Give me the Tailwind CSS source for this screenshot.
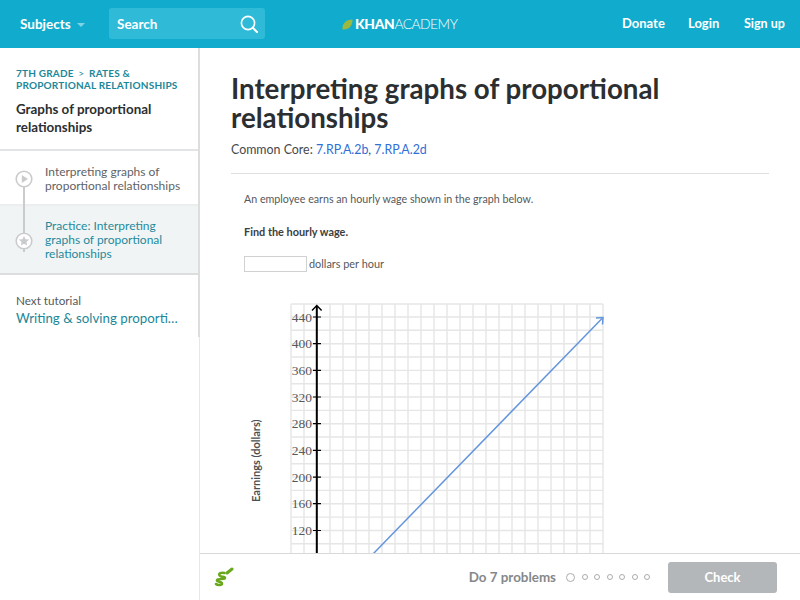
<!DOCTYPE html>
<html lang="en">
<head>
    <meta charset="UTF-8">
    <meta name="viewport" content="width=device-width, initial-scale=1.0">
    <title>Interpreting graphs of proportional relationships</title>
    <script src="https://cdn.jsdelivr.net/npm/@tailwindcss/browser@4"></script>
</head>
<body class="bg-white font-['Lato',sans-serif] text-[#3b3e40]">
    <div class="relative w-[800px] h-[600px] overflow-hidden">
        <!-- top nav -->
        <header class="h-[48px] bg-[#11accd] flex items-center text-white">
            <div class="w-[109px] pl-[20px] flex items-center gap-[6px] text-[13.5px] font-bold">
                <span>Subjects</span>
                <span class="w-0 h-0 mt-[2px] border-x-[4px] border-x-transparent border-t-[4px] border-t-[#7fd3e6]"></span>
            </div>
            <div class="w-[156px] h-[31px] -mt-[1px] bg-[#2fbbd8] rounded-[3px] flex items-center justify-between pl-[8px] pr-[6px] text-[13.5px] font-bold">
                <span class="mt-[2px]">Search</span>
                <svg width="20" height="20" viewBox="0 0 20 20" fill="none" stroke="white" stroke-width="1.6" stroke-linecap="round"><circle cx="9" cy="9" r="6.6"/><path d="M13.8 13.8L18 18" stroke-width="2"/></svg>
            </div>
            <div class="w-[357px] pl-[77px] flex items-center">
                <svg width="11" height="11" viewBox="0 0 11 11" class="mr-[2px]"><path d="M0.5 10.5C0 5 3.5 0.5 10.5 0.5C10.5 7 7 11 0.5 10.5Z" fill="#9cb93f"/></svg>
                <span class="text-[13.8px] font-black tracking-[-0.3px]">KHAN</span><span class="text-[13.8px] font-light tracking-[-0.5px]">ACADEMY</span>
            </div>
            <nav class="flex-1 flex items-center text-[13px] font-bold">
                <span class="w-[66px]">Donate</span>
                <span class="w-[56px]">Login</span>
                <span class="text-[12.5px]">Sign up</span>
            </nav>
        </header>

        <div class="flex h-[552px]">
            <!-- sidebar -->
            <aside class="w-[200px] shrink-0 border-r border-[#e6e7e8]">
                <div class="h-[289px] -mr-px border-r-2 border-[#dcdddf]">
                    <div class="h-[103px] border-b-2 border-[#e3e4e5] px-[16px] pt-[19px]">
                        <div class="text-[10px] leading-[12px] font-bold tracking-[0.2px] text-[#1b8799] whitespace-nowrap">7TH GRADE <span class="mx-[2px] font-normal">&gt;</span> RATES &amp;<br>PROPORTIONAL RELATIONSHIPS</div>
                        <div class="mt-[9px] text-[13.4px] leading-[18px] font-bold text-[#2c2f31]">Graphs of proportional relationships</div>
                    </div>
                    <div class="relative">
                        <div class="absolute left-[23px] top-[31px] w-[2px] h-[70px] bg-[#c9cbcd]"></div>
                        <div class="h-[55px] border-b-2 border-[#eceded] pl-[45px] pt-[14px] text-[12px] leading-[14px] text-[#5f6366]">Interpreting graphs of<br>proportional relationships</div>
                        <div class="h-[69px] bg-[#f1f4f4] border-b-2 border-[#dcdddf] pl-[45px] pt-[13px] text-[12px] leading-[14px] text-[#1f8a9c]">Practice: Interpreting<br>graphs of proportional<br>relationships</div>
                        <svg class="absolute left-[15px] top-[19px]" width="18" height="18" viewBox="0 0 18 18"><circle cx="9" cy="9" r="7.8" fill="white" stroke="#c9cbcd" stroke-width="1.6"/><path d="M6.8 5L13 9L6.8 13Z" fill="#c9cbcd"/></svg>
                        <svg class="absolute left-[15px] top-[81px]" width="18" height="18" viewBox="0 0 18 18"><circle cx="9" cy="9" r="7.8" fill="white" stroke="#c9cbcd" stroke-width="1.6"/><path d="M9 3.8L10.5 7.2L14.2 7.6L11.4 10L12.2 13.6L9 11.7L5.8 13.6L6.6 10L3.8 7.6L7.5 7.2Z" fill="#c9cbcd"/></svg>
                    </div>
                    <div class="pl-[16px] pt-[17px]">
                        <div class="text-[11.7px] leading-[16px] text-[#55595c]">Next tutorial</div>
                        <div class="mt-[1px] w-[164px] truncate text-[13.3px] leading-[19px] text-[#1b8799]">Writing &amp; solving proportional relationships</div>
                    </div>
                </div>
            </aside>

            <!-- main content -->
            <main class="flex-1 pl-[31px] pr-[31px] pt-[26px]">
                <h1 class="text-[27.7px] leading-[29px] font-bold text-[#2c2f31]">Interpreting graphs of proportional relationships</h1>
                <div class="mt-[9px] text-[12.4px] leading-[18px] text-[#45494c]">Common Core: <span class="text-[#2f6fd6]">7.RP.A.2b</span>, <span class="text-[#2f6fd6]">7.RP.A.2d</span></div>
                <div class="mt-[14px] h-[1px] bg-[#dfe0e1]"></div>
                <div class="pl-[13px] pt-[17px]">
                    <p class="text-[10.7px] leading-[16px] text-[#55595c]">An employee earns an hourly wage shown in the graph below.</p>
                    <p class="mt-[17px] text-[10.9px] leading-[16px] font-bold text-[#3b3e40]">Find the hourly wage.</p>
                    <div class="mt-[16px] flex items-center text-[10.9px] leading-[16px] text-[#55595c]">
                        <input class="w-[63px] h-[16px] bg-white border border-[#cfd1d3] mr-[2px]" type="text" aria-label="dollars per hour">
                        <span>dollars per hour</span>
                    </div>
                    <!-- graph, svg x=240 y=295 in page coords -->
                    <svg class="block mt-[24px] -ml-[4px]" width="370" height="258" viewBox="240 296 370 258">
                        <g stroke="#e6e6e6" stroke-width="1.400" fill="none">
                            <path d="M291 304V554M304 304V554M317 304V554M330 304V554M343 304V554M356 304V554M369 304V554M382 304V554M395 304V554M408 304V554M421 304V554M434 304V554M447 304V554M460 304V554M473 304V554M486 304V554M499 304V554M512 304V554M525 304V554M538 304V554M551 304V554M564 304V554M577 304V554M590 304V554M603 304V554"/>
                            <path d="M291 304H603M291 317H603M291 330.300H603M291 343.700H603M291 357H603M291 370.400H603M291 383.700H603M291 397H603M291 410.400H603M291 423.700H603M291 437H603M291 450.400H603M291 463.700H603M291 477.100H603M291 490.400H603M291 503.700H603M291 517.100H603M291 530.500H603M291 543.800H603"/>
                        </g>
                        <path d="M316.800 554V306" stroke="#000" stroke-width="2" fill="none"/>
                        <path d="M312 310.500L316.800 305.500L321.600 310.500" stroke="#000" stroke-width="1.400" fill="none"/>
                        <g stroke="#000" stroke-width="1.200">
                            <path d="M313 317H321M313 343.700H321M313 370.400H321M313 397H321M313 423.700H321M313 450.400H321M313 477.100H321M313 503.700H321M313 530.500H321"/>
                        </g>
                        <g fill="#55595c" font-family="'Liberation Serif',serif" font-size="13.500" text-anchor="end">
                            <text x="312" y="321.500">440</text>
                            <text x="312" y="348">400</text>
                            <text x="312" y="374.500">360</text>
                            <text x="312" y="401.500">320</text>
                            <text x="312" y="428">280</text>
                            <text x="312" y="454.500">240</text>
                            <text x="312" y="481.500">200</text>
                            <text x="312" y="508">160</text>
                            <text x="312" y="535">120</text>
                        </g>
                        <text transform="translate(260 502) rotate(-90)" font-family="Lato,sans-serif" font-size="11" font-weight="700" fill="#4c5053">Earnings (dollars)</text>
                        <path d="M373 554L602 318.500" stroke="#6495dc" stroke-width="1.500" fill="none"/>
                        <path d="M596 318L603 317.500L602.500 324.500" stroke="#6495dc" stroke-width="1.500" fill="none"/>
                    </svg>
                </div>
            </main>
        </div>

        <!-- exercise footer, sits over the scrolled content -->
        <footer class="absolute left-[200px] right-0 bottom-0 h-[47px] bg-white border-t border-[#d8d9da] flex items-center pl-[14px] pr-[23px]">
            <svg width="20" height="20" viewBox="0 0 20 20" fill="none" stroke="#69a81c" stroke-linecap="round" stroke-linejoin="round" class="-mt-[1px]"><path d="M13 6L18 2" stroke-width="3"/><path d="M10.500 6C7 5 4.500 6.500 5.500 8.500C6.500 10.500 11 9 11 11C11 13 4 11 3 13C2 15 8 14.500 8 16.500C8 18.500 3.500 18.500 2 17" stroke-width="2.500"/></svg>
            <span class="ml-auto text-[13.4px] font-bold text-[#85888b]">Do 7 problems</span>
            <div class="ml-[10px] flex items-center gap-[6.500px]">
                <span class="w-[9px] h-[9px] rounded-full border border-[#a9acae]"></span>
                <span class="w-[6px] h-[6px] rounded-full border border-[#a9acae]"></span>
                <span class="w-[6px] h-[6px] rounded-full border border-[#a9acae]"></span>
                <span class="w-[6px] h-[6px] rounded-full border border-[#a9acae]"></span>
                <span class="w-[6px] h-[6px] rounded-full border border-[#a9acae]"></span>
                <span class="w-[6px] h-[6px] rounded-full border border-[#a9acae]"></span>
                <span class="w-[6px] h-[6px] rounded-full border border-[#a9acae]"></span>
            </div>
            <button class="ml-[18px] w-[109px] h-[31px] mt-[1px] rounded-[3px] bg-[#b4b7ba] text-white text-[13px] font-bold">Check</button>
        </footer>
    </div>
</body>
</html>
